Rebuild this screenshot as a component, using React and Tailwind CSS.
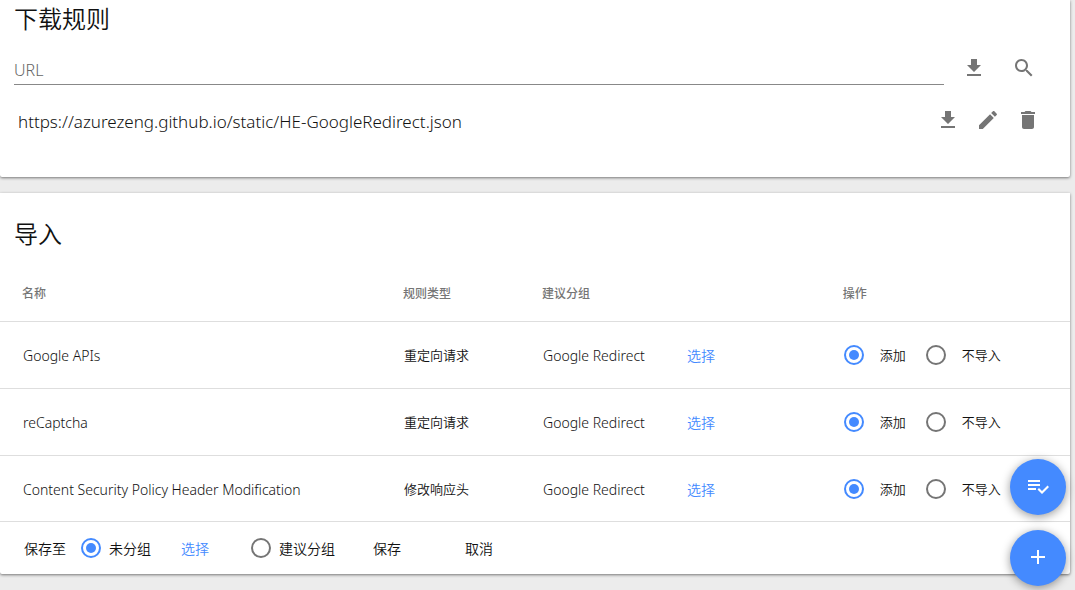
import React, { useState } from 'react';
import clsx from 'clsx';

const ICONS = {
  download: 'M19 9h-4V3H9v6H5l7 7 7-7zM5 18v2h14v-2H5z',
  search: 'M15.5 14h-.79l-.28-.27C15.41 12.59 16 11.11 16 9.5 16 5.91 13.09 3 9.5 3S3 5.91 3 9.5 5.91 16 9.5 16c1.61 0 3.09-.59 4.23-1.57l.27.28v.79l5 4.99L20.49 19l-4.99-5zm-6 0C7.01 14 5 11.99 5 9.5S7.01 5 9.5 5 14 7.01 14 9.5 11.99 14 9.5 14z',
  edit: 'M3 17.25V21h3.75L17.81 9.94l-3.75-3.75L3 17.25zM20.71 7.04c.39-.39.39-1.02 0-1.41l-2.34-2.34c-.39-.39-1.02-.39-1.41 0l-1.83 1.83 3.75 3.75 1.83-1.83z',
  remove: 'M6 19c0 1.1.9 2 2 2h8c1.1 0 2-.9 2-2V7H6v12zM19 4h-3.5l-1-1h-5l-1 1H5v2h14V4z',
  checkList: 'M14 10H2v2h12v-2zm0-4H2v2h12V6zM2 16h8v-2H2v2zm19.5-4.5L23 13l-6.99 7-4.51-4.5L13 14l3.01 3 5.49-5.5z',
  add: 'M19 13h-6v6h-2v-6H5v-2h6V5h2v6h6v2z',
};

const Icon = ({ name }) => (
  <svg viewBox="0 0 24 24" className="block h-6 w-6" fill="currentColor" aria-hidden="true">
    <path d={ICONS[name]} />
  </svg>
);

const IconButton = ({ name, label }) => (
  <button type="button" aria-label={label} className="text-[#757575]">
    <Icon name={name} />
  </button>
);

const Fab = ({ name, label }) => (
  <button
    type="button"
    aria-label={label}
    className="flex h-14 w-14 items-center justify-center rounded-full bg-[#448aff] pb-0.5 text-white shadow-[0_2px_10px_rgba(0,0,0,0.4)]"
  >
    <Icon name={name} />
  </button>
);

const Radio = ({ name, label, checked, onChange, className }) => (
  <label className={clsx('flex items-center', className)}>
    <input
      type="radio"
      name={name}
      checked={checked}
      onChange={onChange}
      className="h-5 w-5 shrink-0 appearance-none rounded-full border-2 border-[#757575] bg-clip-content p-[3px] checked:border-[#448aff] checked:bg-[#448aff]"
    />
    <span className="pt-0.5">{label}</span>
  </label>
);

const Card = ({ className, children }) => (
  <section
    className={clsx(
      'rounded-b-[2px] bg-white shadow-[0_1px_3px_rgba(0,0,0,0.5)]',
      className
    )}
  >
    {children}
  </section>
);

const RULES = [
  { name: 'Google APIs', type: '重定向请求', group: 'Google Redirect' },
  { name: 'reCaptcha', type: '重定向请求', group: 'Google Redirect' },
  { name: 'Content Security Policy Header Modification', type: '修改响应头', group: 'Google Redirect' },
];

const SOURCES = ['https://azurezeng.github.io/static/HE-GoogleRedirect.json'];

const DownloadCard = () => {
  const [url, setUrl] = useState('');

  return (
    <Card className="pb-[45px]">
      <h2 className="px-3.5 pt-[3px] text-2xl leading-8">下载规则</h2>
      <div className="flex items-center pt-5 pr-[34px] pl-3.5">
        <input
          type="text"
          aria-label="URL"
          placeholder="URL"
          value={url}
          onChange={(e) => setUrl(e.target.value)}
          className="h-[30px] min-w-0 flex-1 border-b border-[#888] bg-transparent text-base outline-none placeholder:text-[#666]"
        />
        <div className="ml-[18px] flex gap-[26px] pb-1">
          <IconButton name="download" label="下载" />
          <IconButton name="search" label="查看" />
        </div>
      </div>
      {SOURCES.map((source) => (
        <div key={source} className="flex items-center pt-[23px] pr-[30px] pl-[18px]">
          <div className="min-w-0 flex-1 truncate pt-1 text-[17px] leading-5">{source}</div>
          <div className="flex gap-4">
            <IconButton name="download" label="下载" />
            <IconButton name="edit" label="编辑" />
            <IconButton name="remove" label="删除" />
          </div>
        </div>
      ))}
    </Card>
  );
};

const RuleRow = ({ rule, index }) => {
  const [add, setAdd] = useState(true);

  return (
    <tr className="h-[67px] border-t border-[#dedede]">
      <td className="pt-0.5 pl-[23px] text-sm">{rule.name}</td>
      <td className="pt-0.5 pl-[23px]">{rule.type}</td>
      <td className="pt-0.5 pl-[23px] text-sm">
        <div className="flex items-center">
          <span className="w-36">{rule.group}</span>
          <button type="button" className="text-[#448aff]">选择</button>
        </div>
      </td>
      <td className="pl-[23px]">
        <div className="flex items-center gap-5">
          <Radio
            name={`rule-${index}`}
            label="添加"
            checked={add}
            onChange={() => setAdd(true)}
            className="gap-4"
          />
          <Radio
            name={`rule-${index}`}
            label="不导入"
            checked={!add}
            onChange={() => setAdd(false)}
            className="gap-4"
          />
        </div>
      </td>
    </tr>
  );
};

const ImportCard = () => {
  const [target, setTarget] = useState('none');

  return (
    <Card className="mt-4">
      <h2 className="px-3.5 pt-[25px] text-2xl leading-8">导入</h2>
      <table className="mt-[15px] w-full table-fixed border-collapse text-left text-[13px]">
        <colgroup>
          <col className="w-[35.6%]" />
          <col className="w-[13%]" />
          <col className="w-[28.1%]" />
          <col />
        </colgroup>
        <thead>
          <tr className="h-14 text-xs text-[#757575]">
            <th className="pt-0.5 pl-[22px] font-medium">名称</th>
            <th className="pt-0.5 pl-[22px] font-medium">规则类型</th>
            <th className="pt-0.5 pl-[22px] font-medium">建议分组</th>
            <th className="pt-0.5 pl-[22px] font-medium">操作</th>
          </tr>
        </thead>
        <tbody>
          {RULES.map((rule, index) => (
            <RuleRow key={rule.name} rule={rule} index={index} />
          ))}
        </tbody>
      </table>
      <div className="-mt-px flex h-[53px] items-center border-t border-[#dedede] pl-6 text-sm">
        <span className="pt-0.5">保存至</span>
        <Radio
          name="target"
          label="未分组"
          checked={target === 'none'}
          onChange={() => setTarget('none')}
          className="ml-[15px] gap-2"
        />
        <button type="button" className="ml-3 w-16 pt-0.5 text-[#448aff]">选择</button>
        <Radio
          name="target"
          label="建议分组"
          checked={target === 'suggested'}
          onChange={() => setTarget('suggested')}
          className="ml-6 gap-2"
        />
        <button type="button" className="ml-5 w-16 pt-0.5">保存</button>
        <button type="button" className="ml-7 w-16 pt-0.5">取消</button>
      </div>
    </Card>
  );
};

const App = () => (
  <div className="min-h-screen bg-[#ececec] pr-[5px] font-['Noto_Sans','Noto_Sans_CJK_SC',sans-serif] font-[350] text-[#111]">
    <DownloadCard />
    <ImportCard />
    <div className="fixed right-[9px] bottom-1 flex flex-col gap-[15px]">
      <Fab name="checkList" label="批量管理" />
      <Fab name="add" label="添加" />
    </div>
  </div>
);

export default App;
